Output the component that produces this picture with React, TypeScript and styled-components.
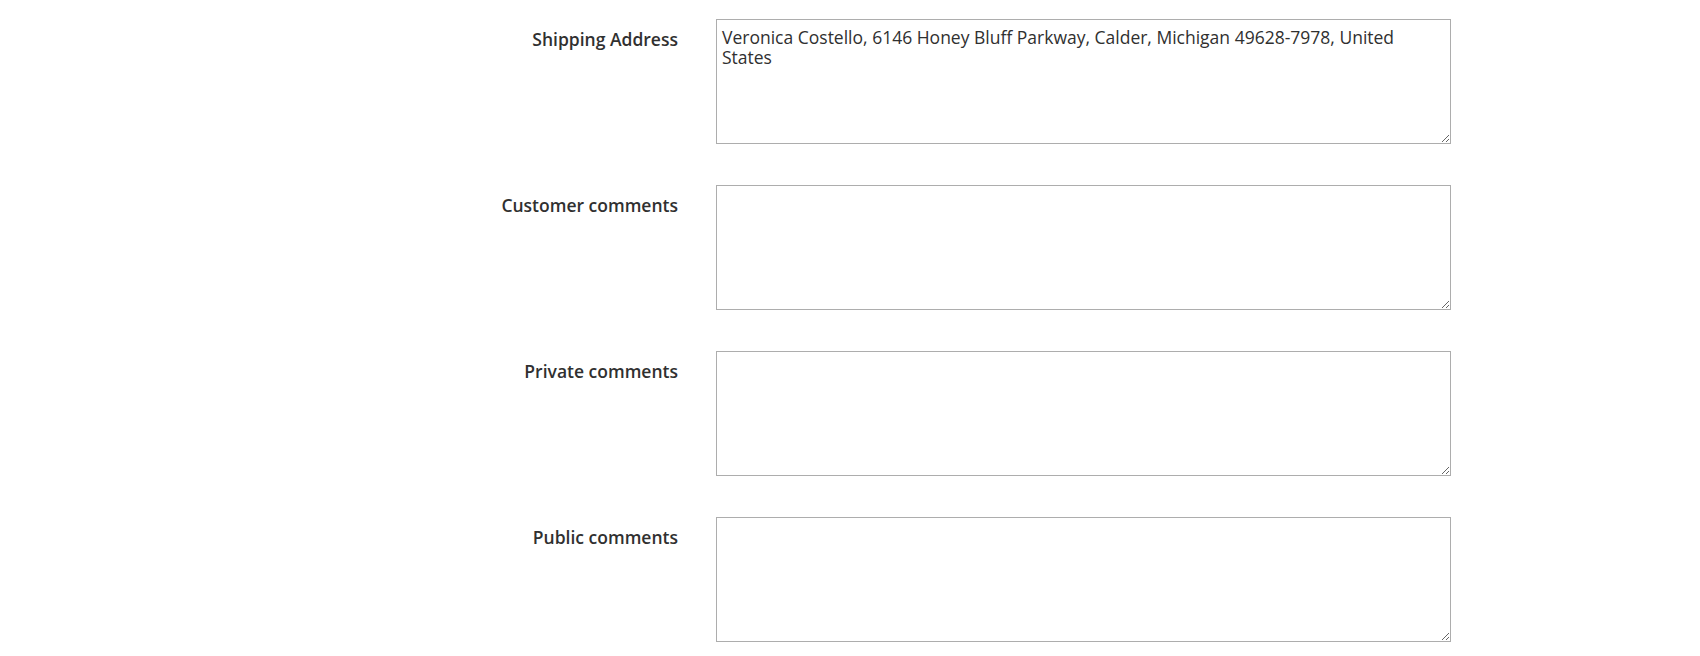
import React from "react";
import styled, { createGlobalStyle } from "styled-components";

const GlobalStyle = createGlobalStyle`
  html, body {
    margin: 0;
    padding: 0;
    background: #ffffff;
  }
  body {
    font-family: "Open Sans", "Noto Sans", sans-serif;
    color: #303030;
  }
`;

const Form = styled.form`
  display: flex;
  flex-direction: column;
  gap: 41px;
  padding-top: 19px;
`;

const Field = styled.div`
  display: flex;
  align-items: flex-start;
  gap: 38px;
`;

const Label = styled.label`
  width: 678px;
  flex: none;
  text-align: right;
  font-size: 17.5px;
  font-weight: 600;
  line-height: 20px;
  padding-top: 10px;
  color: #303030;
`;

const TextArea = styled.textarea`
  box-sizing: border-box;
  width: 735px;
  height: 125px;
  margin: 0;
  padding: 7px 5px;
  border: 1px solid #adadad;
  border-radius: 0;
  font-family: "Open Sans", "Noto Sans", sans-serif;
  font-size: 17.5px;
  line-height: 20px;
  color: #303030;
  background: #ffffff;
  resize: vertical;
  outline: none;
`;

const fields = [
  {
    id: "shipping",
    label: "Shipping Address",
    value:
      "Veronica Costello, 6146 Honey Bluff Parkway, Calder, Michigan 49628-7978, United States",
  },
  { id: "customer", label: "Customer comments", value: "" },
  { id: "private", label: "Private comments", value: "" },
  { id: "public", label: "Public comments", value: "" },
];

export default function App() {
  return (
    <>
      <GlobalStyle />
      <Form>
        {fields.map((f) => (
          <Field key={f.id}>
            <Label htmlFor={f.id}>{f.label}</Label>
            <TextArea id={f.id} defaultValue={f.value} />
          </Field>
        ))}
      </Form>
    </>
  );
}
